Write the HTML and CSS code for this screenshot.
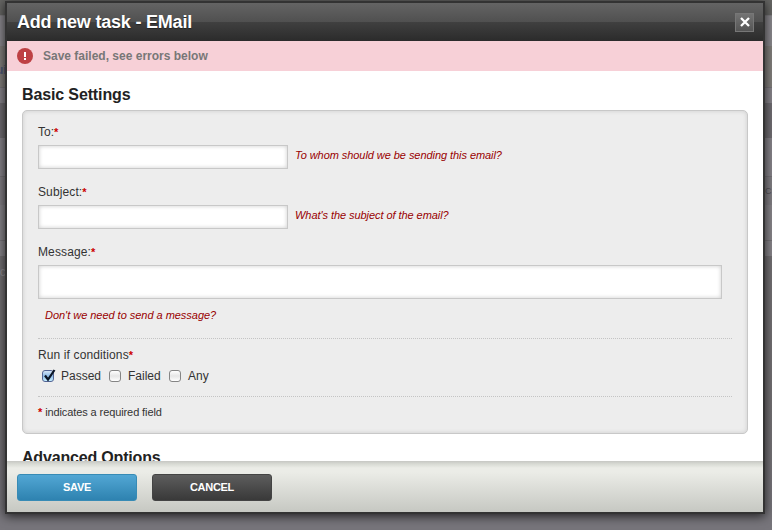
FILE: index.html
```
<!DOCTYPE html>
<html lang="en">
<head>
<meta charset="utf-8">
<title>Add new task - EMail</title>
<link rel="stylesheet" href="styles.css">
</head>
<body>
<span class="behind behind-link">ui</span>
<span class="behind behind-left">ic</span>
<span class="behind behind-right">C</span>
<div class="modal">
  <header class="modal-head">
    <h1>Add new task - EMail</h1>
    <button class="close" aria-label="Close"><svg width="10" height="10" viewBox="0 0 10 10"><path d="M1 1L9 9M9 1L1 9" stroke="#fff" stroke-width="2.3" fill="none"/></svg></button>
  </header>
  <div class="alert">
    <svg width="16" height="16" viewBox="0 0 16 16"><circle cx="8" cy="8" r="8" fill="#be4144"/><path d="M7 4h2v5H7zM7 10h2v2H7z" fill="#fff"/></svg>
    <span>Save failed, see errors below</span>
  </div>
  <main class="modal-body">
    <h2 class="basic">Basic Settings</h2>
    <section class="fieldset">
      <div class="field">
        <label for="to"><span class="t-to">To:</span><b>*</b></label>
        <div class="line"><input id="to" type="text"><em class="e-to">To whom should we be sending this email?</em></div>
      </div>
      <div class="field">
        <label for="subject"><span class="t-wide">Subject:</span><b>*</b></label>
        <div class="line"><input id="subject" type="text"><em class="e-subject">What's the subject of the email?</em></div>
      </div>
      <div class="field message">
        <label for="message"><span class="t-wide">Message:</span><b>*</b></label>
        <textarea id="message"></textarea>
        <em class="e-message">Don't we need to send a message?</em>
      </div>
      <div class="conditions">
        <label><span class="t-wide">Run if conditions</span><b>*</b></label>
        <div class="checks">
          <span class="box checked"><svg width="14" height="14" viewBox="0 0 14 14"><path d="M3 6.5L6 10.5L12.5 1" fill="none" stroke="#0a1526" stroke-width="2.2"/></svg></span><span class="opt passed">Passed</span>
          <span class="box"></span><span class="opt failed">Failed</span>
          <span class="box"></span><span class="opt any">Any</span>
        </div>
      </div>
      <p class="required"><b>*</b> indicates a required field</p>
    </section>
    <h2 class="advanced">Advanced Options</h2>
  </main>
  <footer class="modal-foot">
    <button class="btn save"><span>SAVE</span></button>
    <button class="btn cancel"><span>CANCEL</span></button>
  </footer>
</div>
</body>
</html>
```
FILE: styles.css
```
* { box-sizing: border-box; }
body {
  margin: 0;
  width: 772px;
  height: 530px;
  padding: 1px 7px 0 5px;
  overflow: hidden;
  position: relative;
  font: 12px/16px "Liberation Sans", Arial, sans-serif;
  color: #333;
  background: linear-gradient(#666664 0 15px, #7f7d81 15px 16px, #8a888d 16px 46px, #827f7c 46px 87px, #777479 87px 88px, #87848a 88px 103px, #706d72 103px 138px, #87848a 138px 176px, #777479 176px 177px, #827f84 177px 205px, #88858a 205px 240px, #777479 240px 241px, #88858a 241px 256px, #747174 256px 400px, #77757b 520px);
}
h1, h2, p { margin: 0; }
.behind { position: absolute; font-size: 12px; line-height: 14px; color: #59565b; }
.behind-link { left: -4px; top: 63px; color: #4f5876; font-weight: bold; }
.behind-left { left: -3px; top: 265px; color: #918e92; }
.behind-right { left: 765px; top: 184px; font-size: 9px; }
.modal {
  position: relative;
  width: 760px;
  height: 513px;
  border: 2px solid #333;
  background: #fff;
  box-shadow: 0 2px 10px rgba(0, 0, 0, .75);
  display: flex;
  flex-direction: column;
}
.modal-head {
  height: 38px;
  flex: none;
  display: flex;
  justify-content: space-between;
  align-items: center;
  padding: 0 9px 0 10px;
  background: linear-gradient(#646464, #505050 50%, #404040 50%, #2b2b2b);
}
h1 { font-size: 18px; line-height: 22px; color: #fff; letter-spacing: -.2px; text-shadow: 0 1px 1px #222; }
.close {
  width: 19px;
  height: 19px;
  padding: 0;
  display: flex;
  align-items: center;
  justify-content: center;
  border: 1px solid #777;
  background: linear-gradient(#737373, #555);
}
.alert {
  height: 30px;
  flex: none;
  display: flex;
  align-items: center;
  gap: 10px;
  padding: 0 10px 1px;
  background: #f7d0d7;
  color: #777;
  font-weight: bold;
}
.modal-body { flex: 1; min-height: 0; overflow: hidden; padding: 14px 15px 0; }
h2 { font-size: 16px; line-height: 20px; color: #222; white-space: nowrap; letter-spacing: -.13px; }
.advanced { letter-spacing: -.18px; }
.fieldset {
  width: 726px;
  height: 324px;
  margin: 5px 0 14px;
  padding: 13px 15px 0;
  border: 1px solid #c8c8c8;
  border-radius: 5px;
  background: #ededed;
  box-shadow: inset 0 0 4px #ccc;
}
.field { height: 60px; }
label { display: block; height: 16px; margin-bottom: 5px; }
.t-wide { letter-spacing: .12px; }
b { color: #c00; font-weight: bold; font-size: 11px; line-height: 1; }
.line { display: flex; align-items: flex-start; gap: 7px; }
input, textarea {
  display: block;
  width: 250px;
  height: 24px;
  margin: 0;
  padding: 3px;
  border: 1px solid #c8c8c8;
  background: #fff;
  box-shadow: inset 0 0 4px #ccc;
  outline: none;
  resize: none;
}
em { font-size: 11px; line-height: 14px; color: #900; white-space: nowrap; margin-top: 3px; letter-spacing: -.06px; }
.message { height: 94px; }
.message textarea { width: 684px; height: 34px; }
.message em { display: block; margin: 9px 0 0 7px; letter-spacing: -.03px; }
.conditions {
  width: 694px;
  height: 59px;
  padding-top: 8px;
  border-top: 1px dotted #c4c4c4;
  border-bottom: 1px dotted #c4c4c4;
}
.checks { display: flex; align-items: center; height: 16px; padding-left: 4px; }
.box {
  width: 12px;
  height: 12px;
  flex: none;
  border: 1px solid #858585;
  border-radius: 3px;
  background: linear-gradient(#fff, #e6e6e6 50%, #fff);
}
.checked { border-color: #536595; background: linear-gradient(#d4e5f7, #8dbbe9 50%, #c6eeff); }
.checked svg { display: block; margin: -2px 0 0 -1px; overflow: visible; }
.opt { margin-left: 7px; white-space: nowrap; }
.passed { width: 48px; }
.failed { width: 41px; }
.required { margin-top: 8px; font-size: 11px; line-height: 14px; letter-spacing: -.1px; }
.modal-foot {
  height: 51px;
  flex: none;
  display: flex;
  gap: 15px;
  padding: 13px 10px 0;
  background: linear-gradient(#c6c7c3, #d8dad4 3px, #ebece7 7px, #ebece7 11px, #c6c8c2);
}
.btn {
  width: 120px;
  height: 27px;
  padding: 0 0 2px;
  border: 1px solid #333;
  border-radius: 3px;
  font: bold 11px/14px "Liberation Sans", Arial, sans-serif;
  letter-spacing: -.3px;
  color: #fff;
}
.save { border-color: #378bb5; background: linear-gradient(#52a7d4, #2e82b0); }
.cancel { border-color: #444; background: linear-gradient(#5d5d5d, #393939); }
```
